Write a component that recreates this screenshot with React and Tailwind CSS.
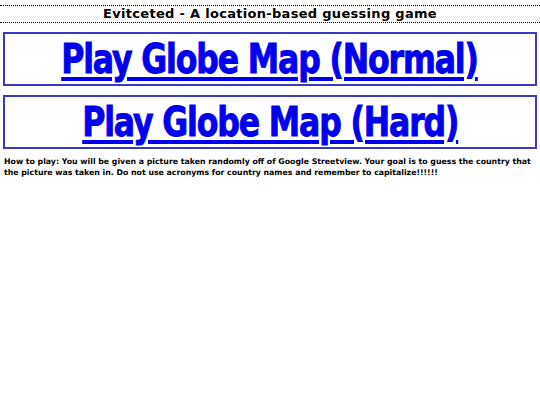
const linkClass =
  "inline-block whitespace-nowrap origin-center [transform:scaleX(0.77)] font-['DejaVu_Sans',sans-serif] text-[41px] font-bold leading-none tracking-[-1.5px] text-[#0000ee] underline decoration-[4px] underline-offset-[4px] [-webkit-text-stroke:1px_#0000ee]";

export default function App() {
  return (
    <div className="min-h-screen bg-white pt-[5px] font-['DejaVu_Sans',Verdana,sans-serif] text-black">
      <h1 className="border-y border-dotted border-black text-center text-[13px] font-bold leading-[16px] tracking-[0.3px]">
        Evitceted - A location-based guessing game
      </h1>

      <div className="mt-[9px] flex flex-col gap-[9px] px-[3px]">
        <div className="flex h-[54px] items-center justify-center border-2 border-[#3a3ac4]">
          <a href="#" className={linkClass}>
            Play Globe Map (Normal)
          </a>
        </div>
        <div className="flex h-[54px] items-center justify-center border-2 border-[#3a3ac4]">
          <a href="#" className={linkClass}>
            Play Globe Map (Hard)
          </a>
        </div>
      </div>

      <p className="mt-[7px] px-[4px] text-[7.8px] font-bold leading-[11px]">
        How to play: You will be given a picture taken randomly off of Google Streetview. Your goal is to guess the country that the picture was taken in. Do not use acronyms for country names and remember to capitalize!!!!!!
      </p>
    </div>
  );
}
